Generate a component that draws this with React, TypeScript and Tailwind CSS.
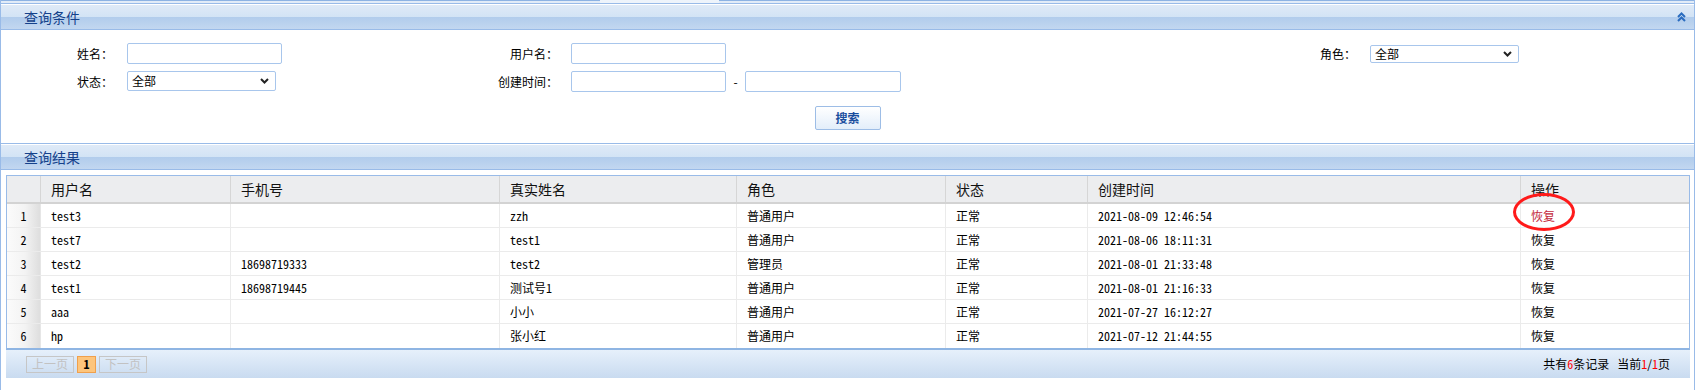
import React from 'react';

const CJK = { fontFamily: '"Noto Sans CJK SC", "Noto Sans", sans-serif' };
const MONO = { fontFamily: '"Noto Sans Mono CJK SC", "Noto Sans CJK SC", "Liberation Mono", monospace' };

const rows = [
  ['1', 'test3', '', 'zzh', '普通用户', '正常', '2021-08-09 12:46:54'],
  ['2', 'test7', '', 'test1', '普通用户', '正常', '2021-08-06 18:11:31'],
  ['3', 'test2', '18698719333', 'test2', '管理员', '正常', '2021-08-01 21:33:48'],
  ['4', 'test1', '18698719445', '测试号1', '普通用户', '正常', '2021-08-01 21:16:33'],
  ['5', 'aaa', '', '小小', '普通用户', '正常', '2021-07-27 16:12:27'],
  ['6', 'hp', '', '张小红', '普通用户', '正常', '2021-07-12 21:44:55'],
];

const headers = ['', '用户名', '手机号', '真实姓名', '角色', '状态', '创建时间', '操作'];

function PanelHeader({ title, collapse }: { title: string; collapse?: boolean }) {
  return (
    <div className="h-[27px] border-t border-b border-[#99bbe8]">
      <div className="h-full flex items-center justify-between pl-[23px] pr-[8px] bg-[linear-gradient(to_bottom,#ffffff_0px,#ffffff_1px,#dfeaf7_1px,#d2e3f5_13px,#b1ccec_13px,#c2d7f0_100%)]">
        <span className="text-[14px] leading-[16px] text-[#15428b]" style={CJK}>{title}</span>
        {collapse && (
          <svg width="9" height="10" viewBox="0 0 9 10">
            <path d="M1 5 L4.5 1.5 L8 5 M1 9 L4.5 5.5 L8 9" fill="none" stroke="#2a6cbf" strokeWidth="2" />
          </svg>
        )}
      </div>
    </div>
  );
}

function TextBox({ w }: { w: string }) {
  return <div className={`${w} h-[21px] border border-[#a8c6ec] rounded-[2px] bg-white`} />;
}

function SelectBox({ h }: { h: string }) {
  return (
    <div className={`w-[149px] ${h} border border-[#a8c6ec] rounded-[2px] bg-white flex items-center justify-between pl-[4px] pr-[6px]`}>
      <span className="text-[12px] leading-[14px] text-black" style={CJK}>全部</span>
      <svg width="9" height="6" viewBox="0 0 9 6">
        <path d="M1 1 L4.5 4.5 L8 1" fill="none" stroke="#222" strokeWidth="2" />
      </svg>
    </div>
  );
}

function Label({ w, text }: { w: string; text: string }) {
  return (
    <div className={`${w} text-right text-[12px] leading-[14px] text-black shrink-0`} style={CJK}>
      {text}
    </div>
  );
}

export default function App() {
  return (
    <div className="w-[1697px] h-[390px] overflow-hidden bg-white">
      <div className="w-[1695px] h-[390px] border-l border-r border-[#99bbe8]">
        {/* top strip */}
        <div className="h-[3px] flex">
          <div className="w-[599px] border-t border-[#8db3e3] bg-[#e2ecf8]" />
          <div className="w-[119px] bg-[#eef4fb]" />
          <div className="flex-1 border-t border-[#8db3e3] bg-[#e2ecf8]" />
        </div>

        <PanelHeader title="查询条件" collapse />

        {/* form */}
        <div className="h-[113px] pt-[13px] flex flex-col">
          <div className="flex items-center h-[21px]">
            <Label w="w-[112px]" text="姓名：" />
            <div className="ml-[14px]"><TextBox w="w-[155px]" /></div>
            <Label w="w-[276px]" text="用户名：" />
            <div className="ml-[13px]"><TextBox w="w-[155px]" /></div>
            <Label w="w-[630px]" text="角色：" />
            <div className="ml-[14px]"><SelectBox h="h-[18px]" /></div>
          </div>
          <div className="flex items-center h-[21px] mt-[7px]">
            <Label w="w-[112px]" text="状态：" />
            <div className="ml-[14px] self-start"><SelectBox h="h-[20px]" /></div>
            <Label w="w-[282px]" text="创建时间：" />
            <div className="ml-[13px]"><TextBox w="w-[155px]" /></div>
            <span className="w-[19px] text-center text-[12px] text-black" style={CJK}>-</span>
            <TextBox w="w-[156px]" />
          </div>
          <div className="flex justify-center mt-[14px]">
            <div className="w-[66px] h-[24px] border border-[#9dbde6] rounded-[2px] bg-[linear-gradient(to_bottom,#ffffff,#e3eefa)] flex items-center justify-center">
              <span className="text-[12px] font-bold text-[#1a4e9e] leading-[14px]" style={CJK}>搜索</span>
            </div>
          </div>
        </div>

        <PanelHeader title="查询结果" />

        {/* table */}
        <div className="ml-[5px] mt-[5px] w-[1684px]">
          <div className="border-l border-r border-t border-b-2 border-[#99bbe8] border-b-[#8fb5e3]" style={CJK}>
            <div className="grid grid-cols-[34px_190px_269px_237px_209px_142px_433px_168px] h-[28px] bg-[#ecedef] border-b-2 border-[#d3d3d3]">
              {headers.map((h, i) => (
                <div
                  key={i}
                  className={`flex items-center pl-[10px] text-[14px] leading-[16px] text-[#111] ${i < 7 ? 'border-r border-[#d6d6d6]' : ''}`}
                >
                  {h}
                </div>
              ))}
            </div>
            {rows.map((r, ri) => (
              <div
                key={ri}
                className={`grid grid-cols-[34px_190px_269px_237px_209px_142px_433px_168px] h-[24px] ${ri < 5 ? 'border-b border-[#ebebeb]' : ''}`}
              >
                <div className="flex items-center justify-center border-r border-[#e6e6e6] bg-[linear-gradient(to_right,#fbfbfb,#f3f3f3_55%,#dedede)] text-[12px] text-black" style={MONO}>
                  {r[0]}
                </div>
                {r.slice(1).map((c, ci) => (
                  <div
                    key={ci}
                    className="flex items-center pl-[10px] border-r border-[#ebebeb] text-[12px] leading-[14px] text-black whitespace-nowrap"
                    style={MONO}
                  >
                    {c}
                  </div>
                ))}
                <div className="relative flex items-center pl-[10px] text-[12px] leading-[14px]" style={CJK}>
                  <span className={ri === 0 ? 'text-[#c42a3c]' : 'text-black'}>恢复</span>
                  {ri === 0 && (
                    <div className="absolute left-[-8px] top-[-11px] w-[62px] h-[38px] rounded-[50%] border-[3px] border-[#ff1a1a] z-10" />
                  )}
                </div>
              </div>
            ))}
          </div>
          {/* footer */}
          <div className="h-[28px] flex items-center justify-between pl-[20px] pr-[20px] bg-[linear-gradient(to_bottom,#e6f0fb,#c9dbf0)]">
            <div className="flex items-center gap-[3px]">
              <div className="w-[48px] h-[17px] border border-[#c6c6c6] flex items-center justify-center text-[12px] leading-[14px] text-[#c2c2c2]" style={CJK}>上一页</div>
              <div className="w-[19px] h-[17px] border border-[#f0a04c] bg-[#fdc57c] flex items-center justify-center text-[12px] leading-[14px] font-bold text-black" style={MONO}>1</div>
              <div className="w-[48px] h-[17px] border border-[#c6c6c6] flex items-center justify-center text-[12px] leading-[14px] text-[#c2c2c2]" style={CJK}>下一页</div>
            </div>
            <div className="text-[12px] leading-[14px] text-black" style={CJK}>
              共有<span className="text-[#ff0000]" style={MONO}>6</span>条记录<span className="ml-[8px]">当前</span><span className="text-[#ff0000]" style={MONO}>1</span>/<span className="text-[#ff0000]" style={MONO}>1</span>页
            </div>
          </div>
        </div>
      </div>
    </div>
  );
}
